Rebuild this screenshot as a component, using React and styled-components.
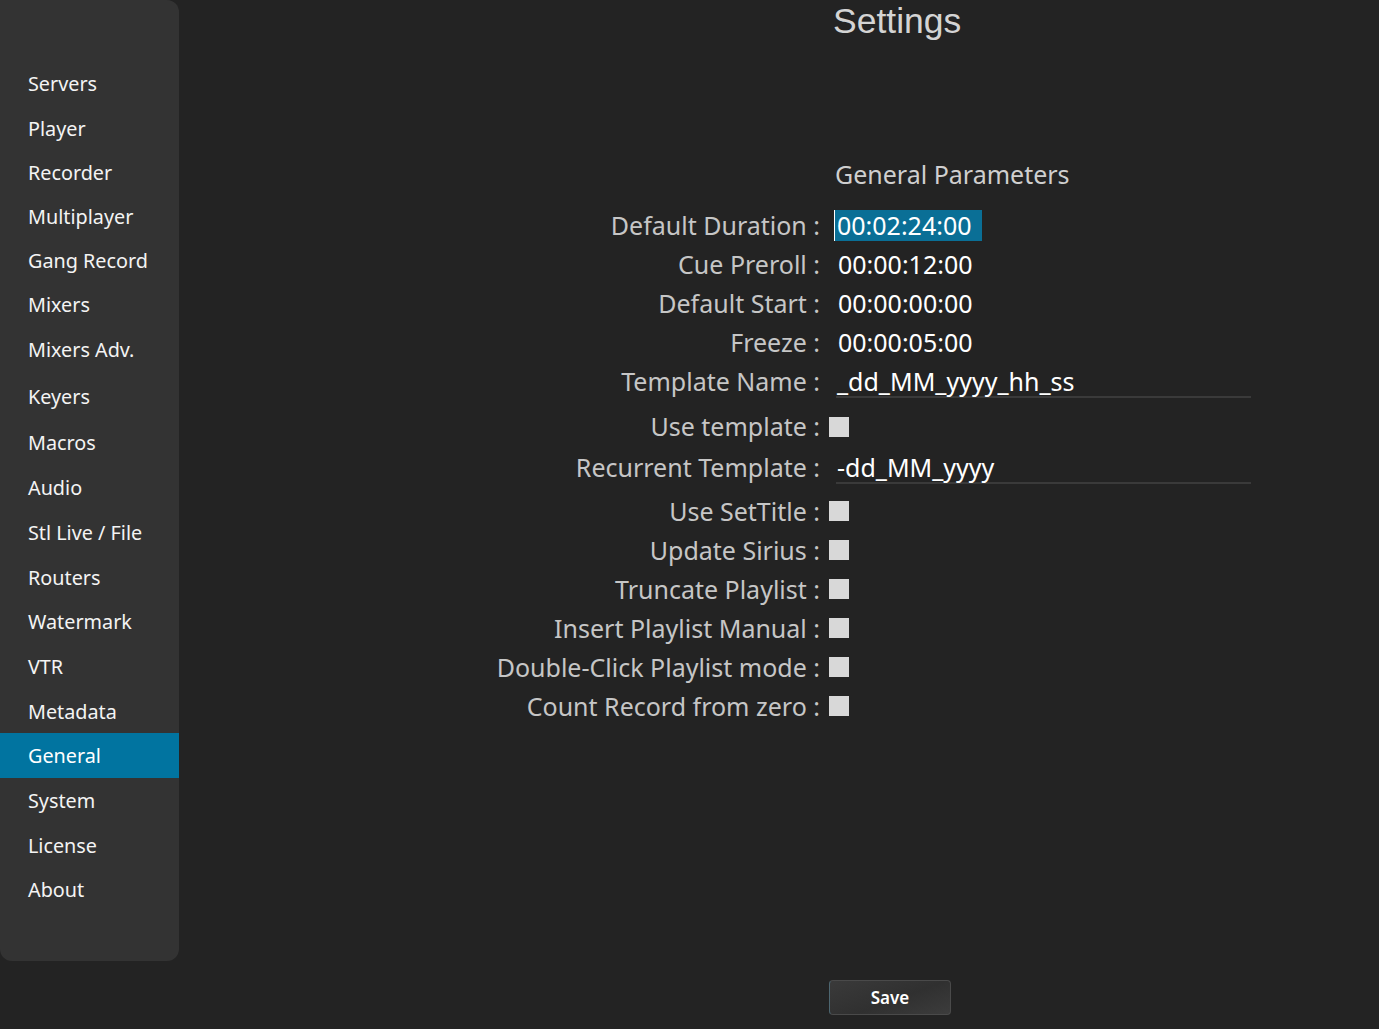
import React from 'react';
import styled, { createGlobalStyle } from 'styled-components';

// row heights follow the spacing of the original menu
const menu = [
  ['Servers', 45], ['Player', 45], ['Recorder', 43.5], ['Multiplayer', 43.5],
  ['Gang Record', 44], ['Mixers', 44], ['Mixers Adv.', 47], ['Keyers', 47],
  ['Macros', 45], ['Audio', 45], ['Stl Live / File', 45], ['Routers', 44.5],
  ['Watermark', 44.5], ['VTR', 45], ['Metadata', 44], ['General', 45],
  ['System', 45], ['License', 44.5], ['About', 44.5],
];

const fields = [
  { label: 'Default Duration', type: 'time', value: '00:02:24:00', selected: true },
  { label: 'Cue Preroll', type: 'time', value: '00:00:12:00' },
  { label: 'Default Start', type: 'time', value: '00:00:00:00' },
  { label: 'Freeze', type: 'time', value: '00:00:05:00' },
  { label: 'Template Name', type: 'text', value: '_dd_MM_yyyy_hh_ss', height: 45 },
  { label: 'Use template', type: 'check', height: 41 },
  { label: 'Recurrent Template', type: 'text', value: '-dd_MM_yyyy', height: 44 },
  { label: 'Use SetTitle', type: 'check' },
  { label: 'Update Sirius', type: 'check' },
  { label: 'Truncate Playlist', type: 'check' },
  { label: 'Insert Playlist Manual', type: 'check' },
  { label: 'Double-Click Playlist mode', type: 'check' },
  { label: 'Count Record from zero', type: 'check' },
];

class App extends React.Component {
  render() {
    return (
      <Page>
        <GlobalStyle />
        <Sidebar>
          <MenuList>
            {menu.map(([item, h]) => (
              <MenuItem key={item} h={h} active={item === 'General'}>{item}</MenuItem>
            ))}
          </MenuList>
        </Sidebar>
        <Main>
          <Title>Settings</Title>
          <SectionTitle>General Parameters</SectionTitle>
          <Fields>
            {fields.map((field) => (
              <Row key={field.label} h={field.height || 39}>
                <Label>{field.label} :</Label>
                <Value tall={field.type === 'text'}>
                  {field.type === 'time' && (
                    <TimeValue selected={field.selected}>{field.value}</TimeValue>
                  )}
                  {field.type === 'text' && <TextValue>{field.value}</TextValue>}
                  {field.type === 'check' && <CheckBox />}
                </Value>
              </Row>
            ))}
          </Fields>
          <Footer>
            <SaveButton>Save</SaveButton>
          </Footer>
        </Main>
      </Page>
    );
  }
}

export default App;

const GlobalStyle = createGlobalStyle`
  html, body {
    margin: 0;
    padding: 0;
    background: #232323;
    font-family: "Noto Sans", "Open Sans", sans-serif;
  }
`;

const Page = styled.div`
  display: flex;
  width: 1379px;
  height: 1029px;
  background: #232323;
  overflow: hidden;
`;

const Sidebar = styled.nav`
  flex: 0 0 179px;
  height: 961px;
  background: #333333;
  border-radius: 0 12px 12px 12px;
  box-sizing: border-box;
  padding-top: 61px;
`;

const MenuList = styled.ul`
  list-style: none;
  margin: 0;
  padding: 0;
`;

const MenuItem = styled.li`
  height: ${(p) => p.h}px;
  display: flex;
  align-items: center;
  padding-left: 28px;
  font-size: 19.8px;
  color: ${(p) => (p.active ? '#ffffff' : '#f4f4f4')};
  background: ${(p) => (p.active ? '#0174a0' : 'transparent')};
`;

const Main = styled.main`
  flex: 1;
  height: 1029px;
  display: flex;
  flex-direction: column;
  /* value column starts 651px into this area */
  --value-x: 651px;
`;

const Title = styled.h1`
  margin: 0 0 0 calc(var(--value-x) + 3px);
  font-family: "Liberation Sans", Arial, sans-serif;
  font-weight: 400;
  font-size: 35.5px;
  line-height: 42px;
  color: #d4d4d4;
`;

const SectionTitle = styled.h2`
  margin: 114px 0 0 calc(var(--value-x) + 5px);
  font-weight: 400;
  font-size: 25px;
  line-height: 36px;
  color: #cfcfcf;
`;

const Fields = styled.div`
  margin-top: 13.5px;
  display: flex;
  flex-direction: column;
`;

const Row = styled.div`
  display: grid;
  grid-template-columns: 1fr 549px;
  column-gap: 10px;
  height: ${(p) => p.h}px;
`;

const Label = styled.div`
  text-align: right;
  font-size: 25px;
  line-height: 39px;
  color: #c6c6c6;
  white-space: nowrap;
`;

const Value = styled.div`
  display: flex;
  align-items: ${(p) => (p.tall ? 'flex-start' : 'center')};
`;

const TimeValue = styled.span`
  display: inline-block;
  margin-left: ${(p) => (p.selected ? '4px' : '8px')};
  padding: 0 ${(p) => (p.selected ? '10px' : '0')} 0 ${(p) => (p.selected ? '2px' : '0')};
  height: 31px;
  line-height: 31px;
  font-size: 25px;
  color: #ffffff;
  background: ${(p) => (p.selected ? '#0a6f96' : 'transparent')};
  border-left: ${(p) => (p.selected ? '1px solid #ffffff' : 'none')};
`;

const TextValue = styled.div`
  margin-left: 6px;
  width: 414px;
  height: 34px;
  line-height: 39px;
  font-size: 25px;
  color: #ffffff;
  padding-left: 1px;
  border-bottom: 2px solid #3a3a3a;
`;

const CheckBox = styled.span`
  display: inline-block;
  width: 20px;
  height: 20px;
  margin-left: -1px;
  background: #d8d8d8;
`;

const Footer = styled.div`
  margin: auto 0 14px calc(var(--value-x) - 1px);
`;

const SaveButton = styled.button`
  width: 122px;
  height: 35px;
  border: 1px solid #4a4a4a;
  border-left-color: #4d6670;
  border-radius: 4px;
  background: linear-gradient(160deg, #3a3a3a 0%, #303030 55%, #3c3c3c 100%);
  color: #ffffff;
  font-family: "Noto Sans", sans-serif;
  font-size: 17px;
  font-weight: 600;
  cursor: pointer;
`;
